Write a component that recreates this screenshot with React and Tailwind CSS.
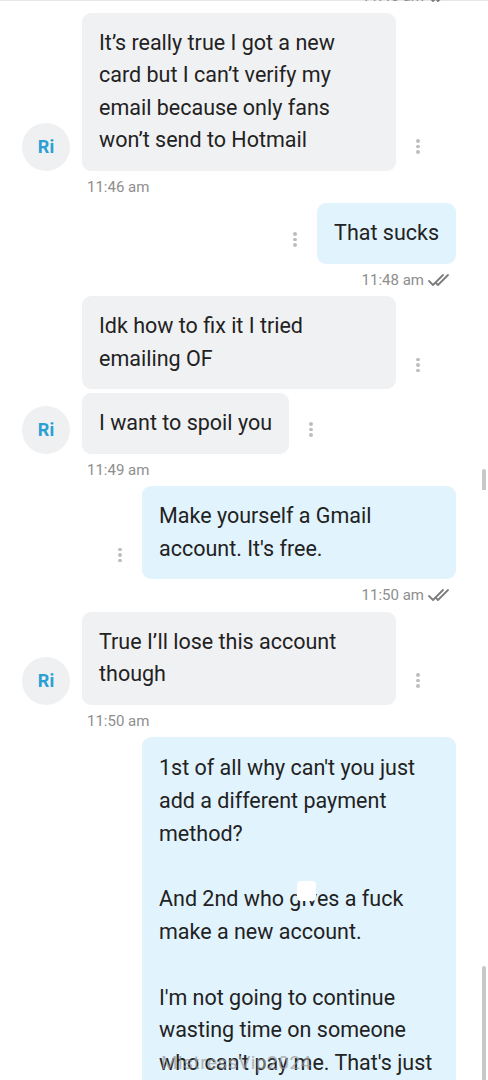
import React from 'react';

const font = { fontFamily: 'Roboto, "Noto Sans", sans-serif' };

const Dots = () => (
  <div className="w-[44px] h-[48px] flex flex-col items-center justify-center gap-[2px] shrink-0">
    <span className="w-[3.5px] h-[3.5px] rounded-full bg-[#bdbdbd]" />
    <span className="w-[3.5px] h-[3.5px] rounded-full bg-[#bdbdbd]" />
    <span className="w-[3.5px] h-[3.5px] rounded-full bg-[#bdbdbd]" />
  </div>
);

const DoubleCheck = () => (
  <svg width="26" height="16" viewBox="0 0 26 16" fill="none" stroke="#7d7d7d" strokeWidth="1.8" strokeLinecap="round" strokeLinejoin="round">
    <path d="M2 9 L6 13 L16 3" />
    <path d="M9 11 L11 13 L21 3" />
  </svg>
);

const Avatar = () => (
  <div className="w-12 h-12 rounded-full bg-[#eff0f2] flex items-center justify-center shrink-0 mr-3">
    <span className="text-[18px] font-bold text-[#2b9fd3]">Ri</span>
  </div>
);

const InBubble = ({ children }) => (
  <div className="flex items-end">
    <div className="max-w-[314px] bg-[#f0f1f3] rounded-[9px] pl-[17px] pr-[17px] py-[14px] text-[21.5px] leading-[32.5px] text-[#222]">
      {children}
    </div>
    <Dots />
  </div>
);

const OutBubble = ({ children, extra = '' }) => (
  <div className="flex items-end justify-end pr-[32px]">
    <Dots />
    <div className={`relative max-w-[314px] bg-[#e1f3fd] rounded-[9px] pl-[17px] pr-[17px] py-[14px] text-[21.5px] leading-[32.5px] text-[#222] ${extra}`}>
      {children}
    </div>
  </div>
);

const Incoming = ({ messages }) => (
  <div className="flex items-end pl-[22px]">
    <Avatar />
    <div className="flex flex-col gap-1">
      {messages.map((m, i) => (
        <InBubble key={i}>{m}</InBubble>
      ))}
    </div>
  </div>
);

const InTime = ({ time }) => (
  <div className="h-[32.5px] flex items-center pl-[87px] text-[15px] text-[#8e8e8e]">{time}</div>
);

const OutTime = ({ time }) => (
  <div className="h-[32.5px] flex items-center justify-end pr-[35px] gap-[3px] text-[15px] text-[#8e8e8e]">
    <span>{time}</span>
    <DoubleCheck />
  </div>
);

export default function App() {
  return (
    <div className="relative w-[488px] h-[1080px] overflow-hidden bg-white" style={font}>
      <div className="border-t border-[#e6e6e6]" />
      <div className="-mt-[21px]">
        <OutTime time="11:45 am" />
      </div>
      <div>
        <Incoming
          messages={[
            'It’s really true I got a new card but I can’t verify my email because only fans won’t send to Hotmail',
          ]}
        />
        <InTime time="11:46 am" />

        <OutBubble>That sucks</OutBubble>
        <OutTime time="11:48 am" />

        <Incoming messages={['Idk how to fix it I tried emailing OF', 'I want to spoil you']} />
        <InTime time="11:49 am" />

        <OutBubble>Make yourself a Gmail account. It's free.</OutBubble>
        <OutTime time="11:50 am" />

        <Incoming messages={['True I’ll lose this account though']} />
        <InTime time="11:50 am" />

        <OutBubble extra="pb-[80px] pt-[15px] leading-[32.8px]">
          <p>1st of all why can't you just add a different payment method?</p>
          <p className="h-[32.8px]" />
          <p className="relative">
            And 2nd who gives a fuck make a new account.
            <span className="absolute left-[138px] top-[-2px] w-[19px] h-[20px] rounded-[4px] bg-white" />
          </p>
          <p className="h-[32.8px]" />
          <p className="relative">
            I'm not going to continue wasting time on someone who can't pay me. That's just
            <span className="absolute left-[2px] bottom-0 text-[19px] text-[#9a9a9a] opacity-70 tracking-[0.5px]">
              MistressVip2024
            </span>
          </p>
        </OutBubble>
      </div>

      {/* scroll indicators */}
      <div className="absolute right-[2px] top-[469px] w-[4px] h-[21px] rounded-t-[2px] bg-[#c8c8c8]" />
      <div className="absolute right-[2px] top-[966px] w-[4px] h-[114px] rounded-t-[2px] bg-[#c8c8c8]" />
    </div>
  );
}
